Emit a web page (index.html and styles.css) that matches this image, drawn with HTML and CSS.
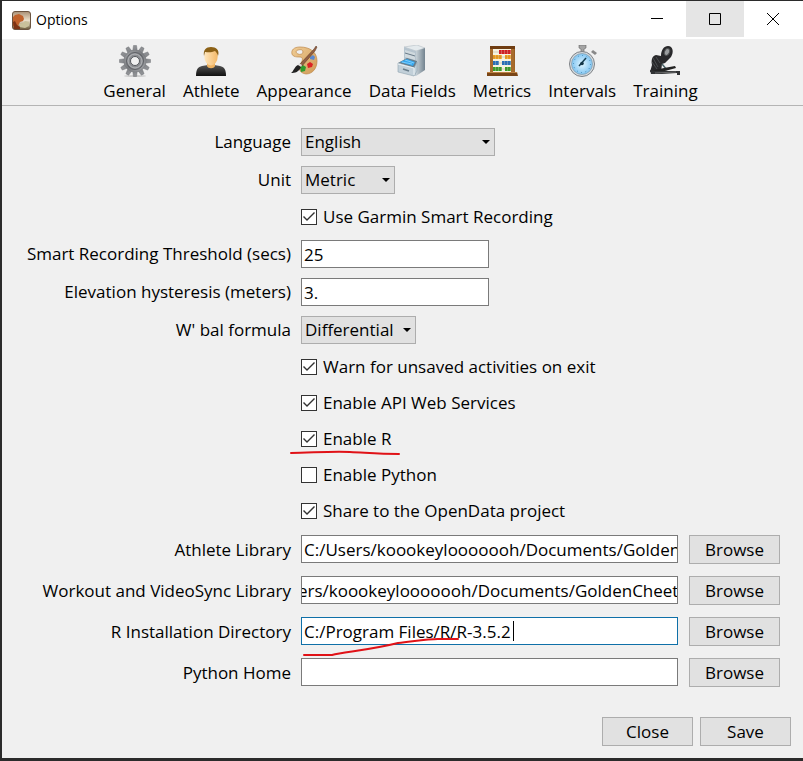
FILE: index.html
```html
<!DOCTYPE html>
<html lang="en">
<head>
<meta charset="utf-8">
<title>Options</title>
<link rel="stylesheet" href="styles.css">
</head>
<body>
<div class="window">
  <header class="titlebar">
    <svg class="app-icon" viewBox="0 0 19 19" aria-hidden="true">
      <defs><linearGradient id="app" x1="0" y1="0" x2="0" y2="1"><stop offset="0" stop-color="#a98f74"/><stop offset=".5" stop-color="#eadfca"/><stop offset="1" stop-color="#6a5a3a"/></linearGradient></defs>
      <rect x=".5" y=".5" width="18" height="18" rx="2.5" fill="url(#app)" stroke="#6b5440"/>
      <path d="M1 15V6l2-2 4-1 4 2 1 3-1 2-3 1-2 4z" fill="#c0622c"/>
      <path d="M1 11l2-1 2 4 3 2v2H2z" fill="#7d3415"/>
      <path d="M7 13l4-1 2-2 4 1v4l-4 2-5-1z" fill="#c9c19b"/>
    </svg>
    <h1>Options</h1>
    <div class="window-buttons">
      <button type="button" aria-label="Minimize"><svg viewBox="0 0 14 14"><path d="M1 6.5h12"/></svg></button>
      <button type="button" class="hover" aria-label="Maximize"><svg viewBox="0 0 14 14"><path d="M1.5 1.5h11v11h-11z"/></svg></button>
      <button type="button" aria-label="Close window"><svg viewBox="0 0 14 14"><path d="M1 1l12 12M13 1L1 13"/></svg></button>
    </div>
  </header>

  <nav class="toolbar">
    <button type="button">
      <svg viewBox="0 0 32 32" aria-hidden="true">
        <defs><linearGradient id="gear" x1="0" y1="0" x2="1" y2="1"><stop offset="0" stop-color="#a5a7aa"/><stop offset=".5" stop-color="#77797d"/><stop offset="1" stop-color="#a9abae"/></linearGradient></defs>
        <ellipse cx="16" cy="31" rx="11" ry="1" fill="#ccc"/>
        <g fill="url(#gear)" stroke="#74767a" stroke-width=".5">
          <g id="teeth"><path d="M13.700 6l.8-5.500h3l.8 5.500zM13.700 26l.8 5.500h3l.8-5.500zM6 13.700l-5.500.8v3l5.500.8zM26 13.700l5.500.8v3l-5.500.8z"/></g>
          <use href="#teeth" transform="rotate(30 16 16)"/><use href="#teeth" transform="rotate(60 16 16)"/>
          <circle cx="16" cy="16" r="11"/>
        </g>
        <circle cx="16" cy="16" r="8.500" fill="none" stroke="#606267"/>
        <circle cx="16" cy="16" r="7" fill="#8b8d91" stroke="#b4b6b9"/>
        <circle cx="16" cy="16" r="4.500" fill="#f0f0f0" stroke="#55585d"/>
      </svg>
      <span>General</span>
    </button>
    <button type="button">
      <svg viewBox="0 0 32 32" aria-hidden="true">
        <defs><linearGradient id="suit" x1="0" y1="0" x2="0" y2="1"><stop offset="0" stop-color="#555"/><stop offset="1" stop-color="#111"/></linearGradient><linearGradient id="skin"><stop offset="0" stop-color="#ffe6bd"/><stop offset="1" stop-color="#f4b968"/></linearGradient></defs>
        <path d="M1 31c0-7 2-9 6-10l6-1h6l6 1c4 1 6 3 6 10z" fill="url(#suit)"/>
        <path d="M12 17h8v4c-1 3-7 3-8 0z" fill="#eeb261"/>
        <ellipse cx="16" cy="11.500" rx="6.700" ry="9" fill="url(#skin)"/>
        <path d="M9 11C8 5 11 2 16 2s9 3 7 9c-1-3-2-4-3-5-4 2-8 1-10 1z" fill="#8c6116"/>
      </svg>
      <span>Athlete</span>
    </button>
    <button type="button">
      <svg viewBox="0 0 32 32" aria-hidden="true">
        <defs><linearGradient id="wood" x1="0" y1="0" x2="1" y2="1"><stop offset="0" stop-color="#f0cd96"/><stop offset="1" stop-color="#d09a55"/></linearGradient></defs>
        <path fill-rule="evenodd" d="M12 2C6 2 3 5 4 9c1 3 5 3 8 3s3 3 1 6c-3 5-2 10 5 11 6 0 11-5 11-13C29 7 22 2 12 2zm-2 3c3-1 5 0 5 2s-3 3-5 2-3-3 0-4z" fill="url(#wood)" stroke="#bd8648" stroke-width=".7"/>
        <path d="M22 12l3-2 2 2-1 3-4-1z" fill="#5c88ce"/><path d="M19 19l3-2 3 2-1 3-4 1z" fill="#db2424"/><path d="M12 22l3-2 3 2-1 4-4 1z" fill="#2f9a2c"/>
        <path d="M26 4l2-3 1 1-2 4L14 21l-2-2z" fill="#936044" stroke="#55331f" stroke-width=".5"/>
        <path d="M11 18l3 2-1 2-3-2z" fill="#ddd"/><path d="M10 20l3 2c-2 5-6 6-10 6 3-2 3-6 7-8z" fill="#222"/>
      </svg>
      <span>Appearance</span>
    </button>
    <button type="button">
      <svg viewBox="0 0 32 32" aria-hidden="true">
        <defs><linearGradient id="metal"><stop offset="0" stop-color="#c7d1d7"/><stop offset="1" stop-color="#73838f"/></linearGradient></defs>
        <path d="M8 2l13-2 8 3-9 3z" fill="#e4eaed" stroke="#aab4bc" stroke-width=".5"/>
        <path d="M8 2l12 4v25L8 26z" fill="#b6c4ce"/>
        <path d="M20 6l9-3v22l-9 6z" fill="url(#metal)"/>
        <path d="M9 5l10 3v7L9 12z" fill="#d0d9de"/><path d="M9 8l10 3" stroke="#687a88"/>
        <path d="M2 18l9-5 10 3-1 7z" fill="#697d8b"/>
        <path d="M4 17l7-3 8 3-2 4z" fill="#35a7ef"/><path d="M6 17l10 2M9 15l9 3" stroke="#8bd6ff" stroke-width=".8"/>
        <path d="M2 18l16 5 3-6v9l-3 5L2 27z" fill="#c2d0d9" stroke="#8fa2af" stroke-width=".6"/>
        <path d="M2 19l16 4v7" fill="none" stroke="#edf3f6"/><path d="M7 24l6 2" stroke="#697d8a" stroke-width="1.500"/>
      </svg>
      <span>Data Fields</span>
    </button>
    <button type="button">
      <svg viewBox="0 0 32 32" aria-hidden="true">
        <path d="M4 1h25v27H4z" fill="#925820"/><path d="M7 4h18v23H7z" fill="#f7f2df"/>
        <path d="M4 1l3 1v26H4zM25 2l3-1 1 28h-4z" fill="#a76b2c"/><path d="M4 1h25v3H4z" fill="#6f3c11"/>
        <path d="M1 27h30l1 4H1z" fill="#794516"/><path d="M1 27h30v1H1z" fill="#bd8141"/>
        <g stroke-width="4" stroke-dasharray="2.700 .3"><path d="M13 7h12" stroke="#d6191f"/><path d="M7 12h9m3 0h6" stroke="#ee9c1c"/><path d="M7 18h6m3 0h9" stroke="#2470bd"/><path d="M7 24h9m3 0h6" stroke="#379d25"/></g>
        <path d="M7 7h18M7 12h18M7 18h18M7 24h18" stroke="#7b7469" stroke-width=".3"/>
      </svg>
      <span>Metrics</span>
    </button>
    <button type="button">
      <svg viewBox="0 0 32 32" aria-hidden="true">
        <defs><radialGradient id="face"><stop offset="0" stop-color="#e0f5ff"/><stop offset="1" stop-color="#81c5f2"/></radialGradient></defs>
        <path d="M13 0h7v3l-2 1v3h-3V4l-2-1z" fill="#a4a4a4" stroke="#666" stroke-width=".6"/>
        <path d="M25 7l2-2 4 3-2 2z" fill="#888"/>
        <circle cx="16" cy="19" r="12.500" fill="#d8dce0" stroke="#7d8185"/>
        <circle cx="16" cy="19" r="10.500" fill="url(#face)" stroke="#8299a8" stroke-width=".7"/>
        <circle cx="16" cy="19" r="8.500" fill="none" stroke="#347ca9" stroke-dasharray=".8 3.650"/>
        <path d="M13 21l7-8" stroke="#143c50" stroke-width="1.500"/><circle cx="16" cy="18.500" r="1.800" fill="#153749"/>
      </svg>
      <span>Intervals</span>
    </button>
    <button type="button">
      <svg viewBox="0 0 32 32" aria-hidden="true">
        <path d="M1 27l2-7c-1-5 0-9 4-10l5 1c0-6 3-10 7-10 5 0 6 6 3 11l-6 6-3 1-1 8z" fill="#29292b"/>
        <ellipse cx="18" cy="7" rx="2.500" ry="3.500" fill="#9a9d9e" stroke="#4d4f50" transform="rotate(25 18 7)"/>
        <path d="M4 13l5 9M7 12l4 6M3 17l5 7" stroke="#54585a" stroke-width=".8"/>
        <path d="M13 19l5 6" stroke="#4a6468" stroke-width="1.500"/>
        <path d="M2 26l13-3 11-2 1 2-11 3-12 3z" fill="#222"/>
        <path d="M1 25l6 1 24 0v4h-3v-2l-15 1-11 0z" fill="#303234"/>
        <path d="M6 28l21-1" stroke="#777" stroke-width=".8"/>
      </svg>
      <span>Training</span>
    </button>
  </nav>

  <form class="options">
    <label for="language">Language</label>
    <div class="select language"><select id="language"><option>English</option></select></div>

    <label for="unit">Unit</label>
    <div class="select unit"><select id="unit"><option>Metric</option></select></div>

    <label class="check"><input type="checkbox" checked>Use Garmin Smart Recording</label>

    <label for="threshold">Smart Recording Threshold (secs)</label>
    <input class="field short" id="threshold" type="text" value="25">

    <label for="hysteresis">Elevation hysteresis (meters)</label>
    <input class="field short" id="hysteresis" type="text" value="3.">

    <label for="formula">W' bal formula</label>
    <div class="select formula"><select id="formula"><option>Differential</option></select></div>

    <label class="check"><input type="checkbox" checked>Warn for unsaved activities on exit</label>
    <label class="check"><input type="checkbox" checked>Enable API Web Services</label>
    <label class="check marked"><input type="checkbox" checked>Enable R
      <svg class="mark mark-check" viewBox="0 0 112 6" aria-hidden="true"><path d="M1 3C20 3 40 1 60 2s30 2 49 2"/></svg>
    </label>
    <label class="check"><input type="checkbox">Enable Python</label>
    <label class="check"><input type="checkbox" checked>Share to the OpenData project</label>

    <label for="athlete">Athlete Library</label>
    <div class="path"><input class="field" id="athlete" type="text" spellcheck="false" value="C:/Users/koookeylooooooh/Documents/GoldenCheetah"><button class="push" type="button">Browse</button></div>

    <label for="workout">Workout and VideoSync Library</label>
    <div class="path"><input class="field" id="workout" type="text" spellcheck="false" value="C:/Users/koookeylooooooh/Documents/GoldenCheetah/workouts"><button class="push" type="button">Browse</button></div>

    <label for="rdir">R Installation Directory</label>
    <div class="path marked caret"><input class="field active" id="rdir" type="text" spellcheck="false" value="C:/Program Files/R/R-3.5.2"><button class="push" type="button">Browse</button>
      <svg class="mark mark-path" viewBox="0 0 158 20" aria-hidden="true"><path d="M1 17h28c12-3 38-5 66-12 18-2 30-4 40-4h20"/></svg>
    </div>

    <label for="python">Python Home</label>
    <div class="path"><input class="field" id="python" type="text"><button class="push" type="button">Browse</button></div>
  </form>

  <footer class="actions">
    <button class="push" type="button">Close</button>
    <button class="push" type="button">Save</button>
  </footer>
</div>
<script src="script.js"></script>
</body>
</html>
```
FILE: styles.css
```css
* {
  box-sizing: border-box;
}

body {
  margin: 0;
  min-height: 100vh;
  padding: 1px 0 3px 2px;
  display: flex;
  background: #2b2b2b;
  color: #000;
  font: 17px/20px "Open Sans", "Noto Sans", sans-serif;
}

button,
input,
select {
  font: inherit;
  color: inherit;
  margin: 0;
}

.window {
  flex: 1;
  min-width: 0;
  display: flex;
  flex-direction: column;
  background: #f0f0f0;
}

.titlebar {
  display: flex;
  align-items: center;
  height: 38px;
  padding: 0 1px 0 10px;
  background: #fff;
}

.app-icon {
  width: 19px;
  height: 19px;
}

.titlebar h1 {
  margin: 0 auto 0 5px;
  font-size: 14px;
  font-weight: 400;
}

.window-buttons {
  display: flex;
  align-self: flex-start;
}

.window-buttons button {
  display: grid;
  place-items: center;
  width: 58px;
  height: 36px;
  padding: 0;
  border: 0;
  background: none;
}

.window-buttons .hover {
  background: #e5e5e5;
}

.window-buttons svg {
  width: 14px;
  height: 14px;
  fill: none;
  stroke: #000;
}

.toolbar {
  display: flex;
  justify-content: center;
  gap: 17px;
  height: 67px;
  padding: 6px 4px 0 0;
  border-bottom: 1px solid #b4b4b4;
}

.toolbar button {
  display: flex;
  flex-direction: column;
  align-items: center;
  gap: 4px;
  padding: 0;
  border: 0;
  background: none;
}

.toolbar svg {
  width: 32px;
  height: 32px;
}

.options {
  display: grid;
  grid-template-columns: 267px 1fr;
  gap: 10px;
  align-items: center;
  padding: 22px 23px 0 22px;
}

.options > label {
  justify-self: end;
  white-space: nowrap;
}

.options > .check {
  grid-column: 2;
  justify-self: start;
  display: flex;
  align-items: center;
  gap: 6px;
  height: 26px;
}

.check input {
  appearance: none;
  width: 16px;
  height: 16px;
  border: 1px solid #333;
  background: #fff;
}

.check input:checked::before {
  content: "";
  display: block;
  width: 14px;
  height: 14px;
  background: #333;
  clip-path: polygon(1px 7px, 2px 6px, 5px 9px, 12px 2px, 13px 3px, 5px 11px);
}

.select {
  position: relative;
}

.select::after {
  content: "";
  position: absolute;
  top: 12px;
  right: 5px;
  border: 4px solid transparent;
  border-top-color: #000;
  border-bottom: 0;
  pointer-events: none;
}

.select select {
  appearance: none;
  display: block;
  width: 100%;
  height: 28px;
  padding: 0 3px;
  border: 1px solid #adadad;
  border-radius: 0;
  background: #e1e1e1;
}

.language {
  width: 194px;
}

.unit {
  width: 94px;
}

.formula {
  width: 115px;
}

.field {
  display: block;
  flex: 1;
  min-width: 0;
  height: 28px;
  padding: 0;
  border: 1px solid #7a7a7a;
  background: #fff;
  outline: 0;
  text-indent: 2px;
}

.short {
  width: 188px;
}

.active {
  border-color: #0f70a8;
}

.path {
  display: flex;
  align-items: flex-start;
  gap: 11px;
  height: 31px;
  padding-top: 1px;
}

.push {
  width: 91px;
  height: 29px;
  padding: 0;
  border: 1px solid #adadad;
  background: #e1e1e1;
}

.marked {
  position: relative;
}

.mark {
  position: absolute;
  fill: none;
  stroke: #e01217;
  stroke-width: 2;
  stroke-linecap: round;
}

.mark-check {
  left: -11px;
  top: 24px;
  width: 112px;
  height: 6px;
}

.mark-path {
  left: 2px;
  top: 22px;
  width: 158px;
  height: 20px;
}

.caret::after {
  content: "";
  position: absolute;
  left: 212px;
  top: 5px;
  width: 1px;
  height: 20px;
  background: #000;
}

.actions {
  display: flex;
  justify-content: flex-end;
  gap: 7px;
  margin-top: auto;
  padding: 0 12px 12px;
}
```
FILE: script.js
```js
// Shows the later part of the long library path.
document.getElementById("workout").scrollLeft = 48;
```
